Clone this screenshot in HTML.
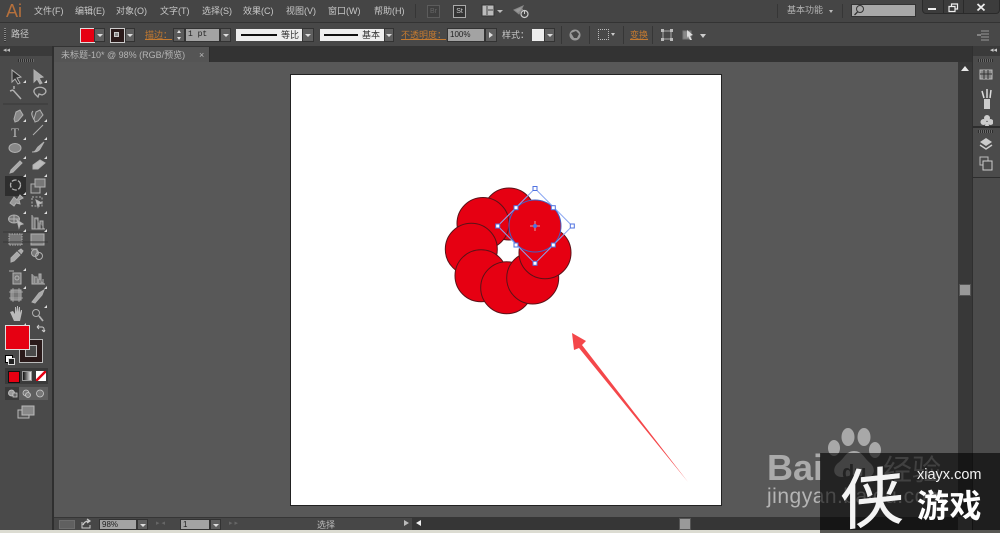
<!DOCTYPE html>
<html><head><meta charset="utf-8"><style>
html,body{margin:0;padding:0;background:#535353}
#p{position:relative;width:1000px;height:533px;overflow:hidden;background:#5a5a5a;font-family:"Liberation Sans","Noto Sans CJK SC",sans-serif;color:#c8c8c8;font-size:9px;filter:blur(.35px)}
.a{position:absolute}
.t{position:absolute;white-space:nowrap;line-height:12px}
.o{color:#c47a30;text-decoration:underline}
.dd{position:absolute;background:#5f5f5f;border:1px solid #333;box-sizing:border-box}
.dd:after{content:"";position:absolute;left:50%;top:50%;margin:-1px 0 0 -3px;border:3px solid transparent;border-top:3px solid #ddd;border-bottom:0}
.f{position:absolute;background:#a3a3a3;color:#222;box-sizing:border-box;border:1px solid #333;line-height:11px;padding-left:2px;font-size:8px;font-family:"Liberation Mono",monospace}
.sep{position:absolute;width:1px;background:#363636}
</style></head><body><div id="p">
<!-- menu bar -->
<div class="a" style="left:0;top:0;width:1000px;height:22px;background:#454545"></div>
<div class="t" style="left:6px;top:1px;font-size:18px;line-height:20px;color:#b5703c">Ai</div>
<div class="t" style="left:34px;top:5px">文件(F)</div>
<div class="t" style="left:75px;top:5px">编辑(E)</div>
<div class="t" style="left:116px;top:5px">对象(O)</div>
<div class="t" style="left:160px;top:5px">文字(T)</div>
<div class="t" style="left:202px;top:5px">选择(S)</div>
<div class="t" style="left:243px;top:5px">效果(C)</div>
<div class="t" style="left:286px;top:5px">视图(V)</div>
<div class="t" style="left:328px;top:5px">窗口(W)</div>
<div class="t" style="left:374px;top:5px">帮助(H)</div>
<div class="sep" style="left:415px;top:4px;height:14px"></div>
<div class="a" style="left:427px;top:5px;width:11px;height:11px;border:1px solid #5c5c5c;background:#3f3f3f;color:#666;font-size:7px;line-height:11px;text-align:center">Br</div>
<div class="a" style="left:453px;top:5px;width:11px;height:11px;border:1px solid #aaa;background:#333;color:#ccc;font-size:7px;line-height:11px;text-align:center">St</div>
<svg class="a" style="left:481px;top:4px" width="22" height="14"><rect x="1" y="1" width="12" height="11" fill="#bbb" stroke="#333"/><path d="M6 2v9M7 6h5" stroke="#444"/><path d="M16 6l3 3 3-3z" fill="#bbb"/></svg>
<svg class="a" style="left:512px;top:4px" width="18" height="15"><path d="M2 6l9-4-4 8zM6 9l5-4" fill="#999" stroke="#888"/><circle cx="12.500" cy="10" r="3.500" fill="none" stroke="#ccc" stroke-width="1.200"/><path d="M12.500 6v4" stroke="#ccc"/></svg>
<div class="t" style="left:787px;top:4px;color:#b4b4b4">基本功能</div>
<div class="a" style="left:829px;top:10px;border:2.500px solid transparent;border-top:3px solid #bbb"></div>
<div class="sep" style="left:777px;top:4px;height:14px"></div>
<div class="sep" style="left:842px;top:4px;height:14px"></div>
<div class="a" style="left:851px;top:4px;width:65px;height:13px;background:#a8a8a8;border:1px solid #333;box-sizing:border-box"></div>
<svg class="a" style="left:852px;top:4px" width="14" height="13"><circle cx="8" cy="5" r="3.500" fill="none" stroke="#333"/><path d="M5.500 8L2.500 11" stroke="#333" stroke-width="1.300"/></svg>
<div class="a" style="left:922px;top:0;width:78px;height:14px;background:#3c3c3c;border:1px solid #2a2a2a;border-top:0;box-sizing:border-box;border-radius:0 0 4px 4px"></div>
<div class="a" style="left:943px;top:0;width:1px;height:14px;background:#2a2a2a"></div>
<div class="a" style="left:963px;top:0;width:1px;height:14px;background:#2a2a2a"></div>
<div class="a" style="left:928px;top:8px;width:8px;height:2px;background:#eee"></div>
<svg class="a" style="left:948px;top:3px" width="11" height="10"><path d="M3.500 3V1h6v5H7M1 3.500h6v5H1z" fill="none" stroke="#eee" stroke-width="1.200"/></svg>
<svg class="a" style="left:976px;top:3px" width="10" height="9"><path d="M1.500 1l7 6.500M8.500 1l-7 6.500" stroke="#eee" stroke-width="1.800"/></svg>
<!-- control bar -->
<div class="a" style="left:0;top:22px;width:1000px;height:24px;background:#484848;border-top:1px solid #333;box-sizing:border-box"></div>
<div class="a" style="left:4px;top:28px;width:2px;height:14px;background:repeating-linear-gradient(#888 0 1px,#333 1px 2px)"></div>
<div class="t" style="left:11px;top:28px">路径</div>
<div class="a" style="left:80px;top:28px;width:13px;height:13px;background:#e60012;border:1px solid #ddd"></div>
<div class="dd" style="left:94px;top:28px;width:11px;height:14px"></div>
<div class="a" style="left:110px;top:28px;width:13px;height:13px;background:#2a1a1a;border:1px solid #ccc"></div>
<div class="a" style="left:114px;top:32px;width:5px;height:5px;border:1px solid #ccc;box-sizing:border-box;background:#888"></div>
<div class="dd" style="left:125px;top:28px;width:10px;height:14px"></div>
<div class="t o" style="left:145px;top:29px">描边：</div>
<div class="a" style="left:173px;top:28px;width:12px;height:14px;background:#5a5a5a;border:1px solid #333;box-sizing:border-box"></div>
<div class="a" style="left:177px;top:30px;border:2.500px solid transparent;border-bottom:3px solid #ddd;border-top:0"></div>
<div class="a" style="left:177px;top:37px;border:2.500px solid transparent;border-top:3px solid #ddd;border-bottom:0"></div>
<div class="f" style="left:185px;top:28px;width:35px;height:14px">1 pt</div>
<div class="dd" style="left:220px;top:28px;width:11px;height:14px"></div>
<div class="a" style="left:236px;top:29px;width:66px;height:12px;background:#eee"></div>
<div class="a" style="left:241px;top:34px;width:36px;height:2px;background:#111"></div>
<div class="t" style="left:281px;top:29px;color:#333">等比</div>
<div class="dd" style="left:302px;top:28px;width:12px;height:14px"></div>
<div class="a" style="left:320px;top:29px;width:64px;height:12px;background:#eee"></div>
<div class="a" style="left:324px;top:34px;width:34px;height:2px;background:#111"></div>
<div class="t" style="left:362px;top:29px;color:#333">基本</div>
<div class="dd" style="left:384px;top:28px;width:10px;height:14px"></div>
<div class="t o" style="left:401px;top:29px">不透明度：</div>
<div class="f" style="left:447px;top:28px;width:38px;height:14px;font-family:'Liberation Sans',sans-serif">100%</div>
<div class="a" style="left:485px;top:28px;width:12px;height:14px;background:#5f5f5f;border:1px solid #333;box-sizing:border-box"></div>
<div class="a" style="left:489px;top:32px;border:3px solid transparent;border-left:4px solid #ddd;border-right:0"></div>
<div class="t" style="left:502px;top:29px">样式：</div>
<div class="a" style="left:532px;top:29px;width:12px;height:12px;background:#eee"></div>
<div class="dd" style="left:544px;top:28px;width:11px;height:14px"></div>
<div class="sep" style="left:561px;top:26px;height:18px"></div>
<svg class="a" style="left:568px;top:28px" width="14" height="14"><circle cx="7" cy="7" r="5.500" fill="#999"/><path d="M3 5l5-2 3 3-2 4-3 0z" fill="#444"/></svg>
<div class="sep" style="left:589px;top:26px;height:18px"></div>
<div class="a" style="left:598px;top:29px;width:9px;height:9px;border:1px dotted #bbb"></div>
<div class="a" style="left:611px;top:33px;border:2.500px solid transparent;border-top:3px solid #ccc;border-bottom:0"></div>
<div class="sep" style="left:623px;top:26px;height:18px"></div>
<div class="t o" style="left:630px;top:29px">变换</div>
<div class="sep" style="left:652px;top:26px;height:18px"></div>
<svg class="a" style="left:660px;top:28px" width="14" height="14"><path d="M3 3h8v8H3z" fill="none" stroke="#aaa"/><path d="M1 1h3v3H1zM10 1h3v3h-3zM1 10h3v3H1zM10 10h3v3h-3z" fill="#bbb"/></svg>
<svg class="a" style="left:682px;top:28px" width="24" height="14"><path d="M1 3h8v8H1z" fill="#888" stroke="#777"/><path d="M5 2l6 5-3 1 2 4-2 0-2-4-1 2z" fill="#ddd"/><path d="M18 6h6l-3 4z" fill="#ccc"/></svg>
<svg class="a" style="left:976px;top:29px" width="14" height="12"><path d="M5 2h8M5 5h8M5 8h8M5 11h8" stroke="#999"/><path d="M1 6h4" stroke="#bbb"/></svg>
<!-- tab bar -->
<div class="a" style="left:54px;top:46px;width:918px;height:16px;background:#333"></div>
<div class="a" style="left:54px;top:47px;width:156px;height:15px;background:#555;border-right:1px solid #2c2c2c;box-sizing:border-box"></div>
<div class="t" style="left:61px;top:49px;color:#b5b5b5">未标题-10* @ 98% (RGB/预览)</div>
<div class="t" style="left:199px;top:49px;color:#bbb;font-size:9px">×</div>
<!-- canvas -->
<div class="a" style="left:54px;top:62px;width:904px;height:455px;background:#585858"></div>
<!-- artboard -->
<div class="a" style="left:290px;top:74px;width:432px;height:432px;background:#fff;border:1px solid #222;box-sizing:border-box"></div>
<!-- scroll right -->
<div class="a" style="left:958px;top:62px;width:14px;height:455px;background:#383838"></div>
<div class="a" style="top:66px;border:5px solid transparent;border-bottom:5px solid #e8e8e8;border-top:0;border-left-width:4px;border-right-width:4px;left:961px"></div>
<div class="a" style="left:959px;top:284px;width:12px;height:12px;background:#999;border:1px solid #555;box-sizing:border-box"></div>
<!-- right panels -->
<div class="a" style="left:972px;top:46px;width:28px;height:487px;background:#4b4b4b;border-left:1px solid #2f2f2f;box-sizing:border-box"></div>
<div class="a" style="left:973px;top:46px;width:27px;height:10px;background:#3a3a3a"></div>
<div class="t" style="left:990px;top:45px;font-size:7px;color:#ccc">◂◂</div>
<div class="a" style="left:978px;top:59px;width:15px;height:3px;background:repeating-linear-gradient(90deg,#2d2d2d 0 1px,#6a6a6a 1px 2px)"></div>
<svg class="a" style="left:979px;top:68px" width="14" height="60"><rect x="1" y="2" width="12" height="9" fill="#888" stroke="#bbb"/><path d="M5 2v9M9 2v9M1 6h12" stroke="#333"/><path d="M5 31h6v10H5z" fill="#ccc"/><path d="M8 30V21M5 30L3 23M11 30L12 22" stroke="#ddd" stroke-width="1.500"/><circle cx="8" cy="50" r="3" fill="#ccc"/><circle cx="4.500" cy="54" r="3" fill="#ccc"/><circle cx="11.500" cy="54" r="3" fill="#ccc"/><path d="M7 54h2l1 4H6z" fill="#ccc"/></svg>
<div class="a" style="left:973px;top:126px;width:27px;height:2px;background:#2d2d2d"></div>
<div class="a" style="left:978px;top:130px;width:15px;height:3px;background:repeating-linear-gradient(90deg,#2d2d2d 0 1px,#6a6a6a 1px 2px)"></div>
<svg class="a" style="left:978px;top:136px" width="16" height="40"><path d="M8 2l6 4-6 4-6-4z" fill="#ccc"/><path d="M2 9l6 4 6-4" fill="none" stroke="#ccc" stroke-width="1.500"/><path d="M2 21h8v8H2z" fill="none" stroke="#bbb"/><path d="M5 25h9v9H5z" fill="#4b4b4b" stroke="#ccc"/></svg>
<div class="a" style="left:973px;top:177px;width:27px;height:1px;background:#2d2d2d"></div>
<!-- left toolbar -->
<div class="a" style="left:0;top:46px;width:54px;height:487px;background:#4a4a4a;border-right:2px solid #2f2f2f;box-sizing:border-box"></div>
<div class="a" style="left:0;top:46px;width:52px;height:10px;background:#3a3a3a"></div>
<div class="t" style="left:3px;top:45px;font-size:7px;color:#bbb">◂◂</div>
<div class="a" style="left:18px;top:59px;width:16px;height:3px;background:repeating-linear-gradient(90deg,#2d2d2d 0 1px,#6a6a6a 1px 2px)"></div>
<div class="a" style="left:5px;top:176px;width:21px;height:20px;background:#2e2e2e"></div>
<svg class="a" style="left:0;top:64px" width="54" height="370" fill="none" stroke="#b0b0b0" stroke-width="1">
<!-- select -->
<path d="M12 6l0 12 3-3 3 5 2-1-3-5 4-1z" fill="#333"/>
<path d="M34 6l0 12 3-3 3 5 2-1-3-5 4-1z" fill="#aaa"/>
<path d="M13 26l8 9M10 27l3-1M14 22v3" stroke-width="1.500"/>
<path d="M34 28a6 4 0 1 1 8 3l-3-1-1 3-3-3z" stroke-width="1.300"/>
<path d="M16 48l-2 7 1 3 3-1 5-6-3-5z" fill="#888"/>
<path d="M36 48l-2 7 1 3 3-1 5-6-3-5zM33 47c-3 3 0 6 1 9" fill="#666"/>
<text x="11" y="73" font-family="Liberation Serif,serif" font-size="13" fill="#bbb" stroke="none">T</text>
<path d="M33 71l10-10"/>
<ellipse cx="15" cy="84" rx="6" ry="4.500" fill="#888"/>
<path d="M32 88c4 0 4-3 6-5l6-5-4 7c-2 3-5 3-8 3z" fill="#aaa"/>
<path d="M11 106l2 2 9-9-2-2zM11 106l-1 3 3-1" fill="#aaa"/>
<path d="M33 101l7-5 5 3-7 6-5 0z" fill="#bbb"/>
<circle cx="15.500" cy="121" r="5" stroke-dasharray="5 1.500" stroke-width="1.300"/>
<path d="M31 120h9v9h-9z" fill="#555"/><path d="M35 115h10v8H35z" fill="#777"/>
<path d="M10 139l4-6 3 3 3-5 3 3-4 2 1 4-4-1-2 3z" fill="#999"/>
<path d="M32 133h10v9H32z" stroke-dasharray="2 1.500"/><path d="M36 136l6 3-3 1-1 3z" fill="#bbb"/>
<ellipse cx="14" cy="155" rx="5.500" ry="4" fill="#777"/><path d="M9 155h11M14 151v8"/><path d="M17 156l6 4-3 1-1 3z" fill="#bbb"/>
<path d="M32 151v14h13M35 165v-11h3v11M40 165v-8h3v8" fill="#777"/>
<rect x="9" y="170" width="13" height="11" fill="#777" stroke-dasharray="1.500 1"/>
<rect x="31" y="170" width="13" height="11" fill="#888"/>
<path d="M11 194l6-6 3 3-6 6-3 1zM18 187l3-2 2 2-2 3" fill="#aaa"/>
<circle cx="35" cy="189" r="3.500" fill="#777"/><circle cx="39" cy="192" r="3.500"/><path d="M31 185h6v5" />
<rect x="13" y="209" width="8" height="11" fill="#777"/><circle cx="17" cy="214" r="2" /><path d="M9 207h5"/>
<path d="M32 210v10h13M35 219v-6h2v6M39 219v-9h2v9M43 219v-4" fill="#888"/>
<rect x="11" y="226" width="10" height="10" fill="#777"/><path d="M9 228h14M9 234h14M13 224v14M19 224v14" stroke-width=".8"/>
<path d="M32 238l7-9 5-3-2 5-7 8z" fill="#aaa"/>
<path d="M10 248l4 9h6l2-9v-2l-1 0-1 3v-6h-1l-1 5v-6h-1v6l-1-5h-1l0 7-2-3z" fill="#bbb" stroke="none"/>
<circle cx="36" cy="249" r="3.500"/><path d="M39 252l4 5" stroke-width="1.800"/>
<g stroke="#383838" stroke-width="1"><path d="M3 40h45M3 168h45M3 178h45"/></g>
</svg>
<svg class="a" style="left:0;top:64px" width="54" height="290" fill="#ddd" stroke="none">
<path d="M26 19l0-3-3 3zM47 19l0-3-3 3zM26 58l0-3-3 3zM47 58l0-3-3 3zM26 76l0-3-3 3zM47 76l0-3-3 3zM26 95l0-3-3 3zM47 95l0-3-3 3zM26 113l0-3-3 3zM47 113l0-3-3 3zM26 131l0-3-3 3zM47 131l0-3-3 3zM26 150l0-3-3 3zM47 150l0-3-3 3zM26 168l0-3-3 3zM47 168l0-3-3 3zM26 207l0-3-3 3zM26 225l0-3-3 3zM47 225l0-3-3 3zM47 244l0-3-3 3zM26 262l0-3-3 3z"/>
</svg>
<!-- colors -->
<div class="a" style="left:19px;top:339px;width:24px;height:24px;background:#2a1a1a;border:1px solid #bbb;box-sizing:border-box"></div>
<div class="a" style="left:25px;top:345px;width:12px;height:12px;background:#4a4a4a;border:1px solid #bbb;box-sizing:border-box"></div>
<div class="a" style="left:5px;top:325px;width:25px;height:25px;background:#e60012;border:1px solid #ddd;box-sizing:border-box"></div>
<svg class="a" style="left:36px;top:324px" width="10" height="10" fill="none" stroke="#ccc"><path d="M1 3h5a2 2 0 0 1 2 2v3M1 3l2-2M1 3l2 2M8 8L6 6M8 8l1-2"/></svg>
<div class="a" style="left:5px;top:355px;width:6px;height:6px;background:#fff;border:1px solid #000"></div>
<div class="a" style="left:8px;top:358px;width:5px;height:5px;background:#222;border:1px solid #ddd"></div>
<div class="a" style="left:5px;top:368px;width:43px;height:16px;background:#3a3a3a"></div>
<div class="a" style="left:8px;top:371px;width:10px;height:10px;background:#e60012;border:1px solid #111"></div>
<div class="a" style="left:22px;top:371px;width:10px;height:10px;background:linear-gradient(90deg,#111,#eee);border:1px solid #999;box-sizing:border-box"></div>
<svg class="a" style="left:36px;top:371px" width="10" height="10"><rect width="10" height="10" fill="#fff"/><path d="M0 10L10 0" stroke="#e60012" stroke-width="2.500"/></svg>
<div class="a" style="left:5px;top:387px;width:43px;height:13px;background:#5f5f5f"></div>
<div class="a" style="left:5px;top:387px;width:14px;height:13px;background:#3a3a3a"></div>
<svg class="a" style="left:7px;top:388px" width="42" height="11" fill="#999" stroke="#ccc" stroke-width=".8"><circle cx="4.500" cy="5" r="3"/><rect x="6" y="5" width="4" height="4" fill="#666"/><circle cx="19" cy="5" r="3" fill="#777"/><circle cx="21" cy="7" r="2.500" fill="#888"/><circle cx="33" cy="5.500" r="3.500" fill="#777"/></svg>
<svg class="a" style="left:17px;top:405px" width="18" height="14" fill="#555" stroke="#bbb"><path d="M1 5h11v8H1z"/><path d="M5 1h12v9H5z" fill="#888"/></svg>
<!-- status bar -->
<div class="a" style="left:54px;top:517px;width:904px;height:13px;background:#474747;border-top:1px solid #363636;box-sizing:border-box"></div>
<div class="a" style="left:59px;top:520px;width:14px;height:7px;background:#606060;border:1px solid #6d6d6d"></div>
<svg class="a" style="left:80px;top:518px" width="12" height="11" fill="none" stroke="#ccc"><path d="M2 4v6h8V7"/><path d="M3 7c1-3 3-4 6-4M7 1l3 2-3 2" stroke-width="1.200"/></svg>
<div class="f" style="left:99px;top:519px;width:38px;height:11px;line-height:9px;font-family:'Liberation Sans',sans-serif">98%</div>
<div class="dd" style="left:137px;top:519px;width:11px;height:11px"></div>
<div class="t" style="left:156px;top:518px;font-size:7px;color:#666">▸ ◂</div>
<div class="f" style="left:180px;top:519px;width:30px;height:11px;line-height:9px;font-family:'Liberation Sans',sans-serif">1</div>
<div class="dd" style="left:210px;top:519px;width:11px;height:11px"></div>
<div class="t" style="left:229px;top:518px;font-size:7px;color:#666">▸ ▸</div>
<div class="t" style="left:317px;top:519px;color:#bbb">选择</div>
<div class="a" style="left:404px;top:520px;border:3.500px solid transparent;border-left:5px solid #bbb;border-right:0"></div>
<div class="a" style="left:412px;top:517px;width:546px;height:13px;background:#363636"></div>
<div class="a" style="left:416px;top:520px;border:3.500px solid transparent;border-right:5px solid #eee;border-left:0"></div>
<div class="a" style="left:679px;top:518px;width:12px;height:12px;background:#999;border:1px solid #555;box-sizing:border-box"></div>
<div class="a" style="left:0;top:530px;width:1000px;height:3px;background:#dcdcd2"></div>
<!-- art -->
<svg class="a" style="left:0;top:0" width="1000" height="533">
<g fill="#e60012" stroke="#5a1218" stroke-width="1">
<circle cx="509" cy="214" r="26"/><circle cx="483" cy="223.500" r="26"/><circle cx="471.300" cy="249.300" r="26"/><circle cx="481" cy="275.700" r="26"/><circle cx="506.700" cy="287.700" r="26"/><circle cx="532.700" cy="278" r="26"/><circle cx="545" cy="252.700" r="26"/><circle cx="535" cy="226" r="26" stroke="#3f62c8"/>
</g>
<path d="M535 188.500L572.300 226 535 263.300 497.700 226z" fill="none" stroke="#8aa6f2" stroke-width="1"/>
<g fill="#fff" stroke="#4f72e0" stroke-width="1"><rect x="533" y="186.500" width="4" height="4"/><rect x="570.300" y="224" width="4" height="4"/><rect x="495.700" y="224" width="4" height="4"/><rect x="533" y="261.300" width="4" height="4"/><rect x="514" y="205.700" width="4" height="4"/><rect x="551.300" y="205.700" width="4" height="4"/><rect x="514" y="243" width="4" height="4"/><rect x="551.300" y="243" width="4" height="4"/></g>
<path d="M530 226h10M535 221v10" stroke="#e0a0a0" stroke-width="1"/><circle cx="535" cy="226" r="2" fill="#4f72e0"/>
<path d="M572 333L586 341 582 345 688 482 579 348 574 350z" fill="#f4474a"/>
</svg>
<!-- watermark -->
<svg class="a" style="left:760px;top:420px" width="240" height="113">
<g fill="#bdbdbd" fill-opacity=".8"><ellipse cx="88" cy="17" rx="6.500" ry="9"/><ellipse cx="104" cy="17" rx="6.500" ry="9"/><ellipse cx="74" cy="28" rx="6" ry="8"/><ellipse cx="115" cy="30" rx="6" ry="8"/><path d="M94 31c-8 0-10 8-16 12-6 5-5 14 4 14 5 0 8-2 12-2s8 2 13 2c8 0 9-9 3-14-6-5-8-12-16-12z"/></g>
<text x="82" y="59" font-family="Liberation Sans,sans-serif" font-weight="bold" font-size="20" fill="#555">du</text>
<text x="7" y="60" font-family="Liberation Sans,sans-serif" font-weight="bold" font-size="36" fill="#b8b8b8" fill-opacity=".85">Bai</text>
<text x="123" y="60" font-family="Liberation Sans,Noto Sans CJK SC,sans-serif" font-size="29" fill="#c4c4c4" fill-opacity=".7">经验</text>
<text x="7" y="83" font-family="Liberation Sans,sans-serif" font-size="21" fill="#c4c4c4" fill-opacity=".85" letter-spacing=".5">jingyan.baidu.com</text>
</svg>
<div class="a" style="left:820px;top:453px;width:180px;height:80px;background:rgba(0,0,0,.6)"></div>
<div class="t" style="left:917px;top:467px;font-size:14.500px;line-height:16px;color:#f2f2f2">xiayx.com</div>
<div class="t" style="left:917px;top:486px;font-size:32px;line-height:36px;font-weight:bold;color:#fff;font-family:'Noto Sans CJK SC',sans-serif;letter-spacing:.5px">游戏</div>
<div class="t" style="left:840px;top:459px;font-size:64px;line-height:70px;color:#f4f4f4;font-family:'Noto Sans CJK SC',sans-serif;transform:rotate(-6deg) skewX(-6deg);-webkit-text-stroke:.6px #f4f4f4">侠</div>
</div></body></html>
